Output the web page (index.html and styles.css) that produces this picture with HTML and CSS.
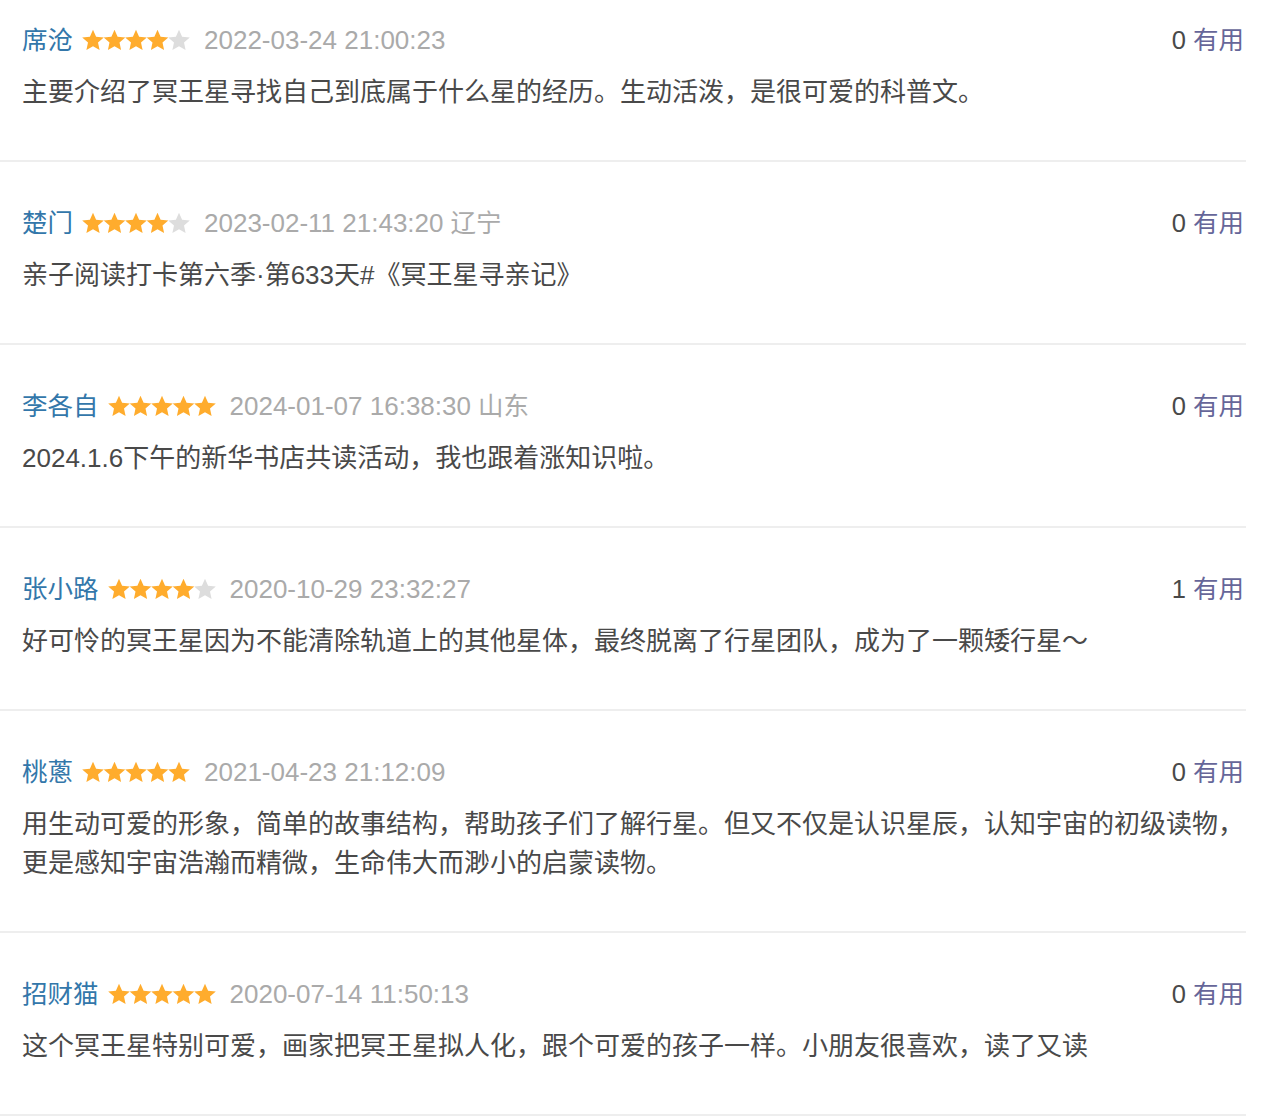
FILE: index.html
```html
<!DOCTYPE html>
<html lang="zh-CN">
<head>
<meta charset="utf-8">
<title>短评</title>
<link rel="stylesheet" href="styles.css">
</head>
<body>
<svg class="defs" width="0" height="0" aria-hidden="true">
  <defs>
    <symbol id="star" viewBox="0 0 22 22">
      <polygon points="11,0.7 14.1,7.7 21.8,8.5 16,13.6 17.6,21.1 11,17.3 4.4,21.1 6,13.6 0.2,8.5 7.9,7.7"/>
    </symbol>
  </defs>
</svg>
<ul class="comments">
  <li class="item">
    <div class="info">
      <a class="name">席沧</a>
      <svg class="stars" viewBox="0 0 108 22"><use href="#star" x="0" width="22" height="22" class="on"/><use href="#star" x="21.5" width="22" height="22" class="on"/><use href="#star" x="43" width="22" height="22" class="on"/><use href="#star" x="64.5" width="22" height="22" class="on"/><use href="#star" x="86" width="22" height="22" class="off"/></svg>
      <span class="time">2022-03-24 21:00:23</span>
      <span class="vote"><span class="count">0</span> <a class="useful">有用</a></span>
    </div>
    <p class="short">主要介绍了冥王星寻找自己到底属于什么星的经历。生动活泼，是很可爱的科普文。</p>
  </li>
  <li class="item">
    <div class="info">
      <a class="name">楚门</a>
      <svg class="stars" viewBox="0 0 108 22"><use href="#star" x="0" width="22" height="22" class="on"/><use href="#star" x="21.5" width="22" height="22" class="on"/><use href="#star" x="43" width="22" height="22" class="on"/><use href="#star" x="64.5" width="22" height="22" class="on"/><use href="#star" x="86" width="22" height="22" class="off"/></svg>
      <span class="time">2023-02-11 21:43:20</span><span class="loc">辽宁</span>
      <span class="vote"><span class="count">0</span> <a class="useful">有用</a></span>
    </div>
    <p class="short">亲子阅读打卡第六季·第633天#《冥王星寻亲记》</p>
  </li>
  <li class="item">
    <div class="info">
      <a class="name">李各自</a>
      <svg class="stars" viewBox="0 0 108 22"><use href="#star" x="0" width="22" height="22" class="on"/><use href="#star" x="21.5" width="22" height="22" class="on"/><use href="#star" x="43" width="22" height="22" class="on"/><use href="#star" x="64.5" width="22" height="22" class="on"/><use href="#star" x="86" width="22" height="22" class="on"/></svg>
      <span class="time">2024-01-07 16:38:30</span><span class="loc">山东</span>
      <span class="vote"><span class="count">0</span> <a class="useful">有用</a></span>
    </div>
    <p class="short">2024.1.6下午的新华书店共读活动，我也跟着涨知识啦。</p>
  </li>
  <li class="item">
    <div class="info">
      <a class="name">张小路</a>
      <svg class="stars" viewBox="0 0 108 22"><use href="#star" x="0" width="22" height="22" class="on"/><use href="#star" x="21.5" width="22" height="22" class="on"/><use href="#star" x="43" width="22" height="22" class="on"/><use href="#star" x="64.5" width="22" height="22" class="on"/><use href="#star" x="86" width="22" height="22" class="off"/></svg>
      <span class="time">2020-10-29 23:32:27</span>
      <span class="vote"><span class="count">1</span> <a class="useful">有用</a></span>
    </div>
    <p class="short">好可怜的冥王星因为不能清除轨道上的其他星体，最终脱离了行星团队，成为了一颗矮行星～</p>
  </li>
  <li class="item">
    <div class="info">
      <a class="name">桃蔥</a>
      <svg class="stars" viewBox="0 0 108 22"><use href="#star" x="0" width="22" height="22" class="on"/><use href="#star" x="21.5" width="22" height="22" class="on"/><use href="#star" x="43" width="22" height="22" class="on"/><use href="#star" x="64.5" width="22" height="22" class="on"/><use href="#star" x="86" width="22" height="22" class="on"/></svg>
      <span class="time">2021-04-23 21:12:09</span>
      <span class="vote"><span class="count">0</span> <a class="useful">有用</a></span>
    </div>
    <p class="short">用生动可爱的形象，简单的故事结构，帮助孩子们了解行星。但又不仅是认识星辰，认知宇宙的初级读物，更是感知宇宙浩瀚而精微，生命伟大而渺小的启蒙读物。</p>
  </li>
  <li class="item">
    <div class="info">
      <a class="name">招财猫</a>
      <svg class="stars" viewBox="0 0 108 22"><use href="#star" x="0" width="22" height="22" class="on"/><use href="#star" x="21.5" width="22" height="22" class="on"/><use href="#star" x="43" width="22" height="22" class="on"/><use href="#star" x="64.5" width="22" height="22" class="on"/><use href="#star" x="86" width="22" height="22" class="on"/></svg>
      <span class="time">2020-07-14 11:50:13</span>
      <span class="vote"><span class="count">0</span> <a class="useful">有用</a></span>
    </div>
    <p class="short">这个冥王星特别可爱，画家把冥王星拟人化，跟个可爱的孩子一样。小朋友很喜欢，读了又读</p>
  </li>
</ul>
</body>
</html>
```

FILE: styles.css
```css
html, body {
  margin: 0;
  padding: 0;
  background: #fff;
}

body {
  font-family: "Liberation Sans", "Noto Sans CJK SC", sans-serif;
  color: #494949;
  overflow: hidden;
}

.defs {
  position: absolute;
  width: 0;
  height: 0;
}

.comments {
  list-style: none;
  margin: -21px 0 0 0;
  padding: 0;
  width: 1246px;
}

.item {
  padding: 43px 2px 48px 22px;
  border-bottom: 2px solid #eeeeee;
}

.info {
  display: flex;
  align-items: center;
  height: 36px;
  font-size: 25.5px;
  line-height: 36px;
}

.name {
  color: #3377aa;
  text-decoration: none;
}

.stars {
  width: 108px;
  height: 22px;
  margin: 0 14px 0 9px;
  flex: none;
}

.stars .on {
  fill: #ffac2d;
}

.stars .off {
  fill: #dddddd;
}

.time {
  color: #aaaaaa;
  font-size: 26px;
}

.loc {
  color: #aaaaaa;
  margin-left: 7px;
}

.vote {
  margin-left: auto;
}

.count {
  color: #494949;
}

.useful {
  color: #666699;
  text-decoration: none;
}

.short {
  margin: 15px 0 0 0;
  font-size: 26px;
  line-height: 39px;
  color: #494949;
}
```
